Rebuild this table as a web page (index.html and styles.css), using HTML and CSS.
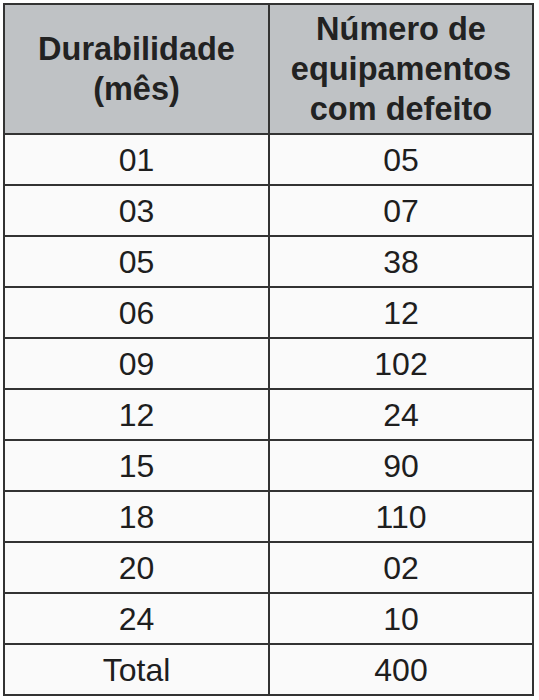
FILE: index.html
```html
<!DOCTYPE html>
<html lang="pt">
<head>
<meta charset="utf-8">
<link rel="stylesheet" href="styles.css">
</head>
<body>
<table class="data">
  <thead>
    <tr>
      <th class="col-a">Durabilidade<br>(mês)</th>
      <th class="col-b">Número de<br>equipamentos<br>com defeito</th>
    </tr>
  </thead>
  <tbody>
    <tr><td class="col-a">01</td><td class="col-b">05</td></tr>
    <tr><td class="col-a">03</td><td class="col-b">07</td></tr>
    <tr><td class="col-a">05</td><td class="col-b">38</td></tr>
    <tr><td class="col-a">06</td><td class="col-b">12</td></tr>
    <tr><td class="col-a">09</td><td class="col-b">102</td></tr>
    <tr><td class="col-a">12</td><td class="col-b">24</td></tr>
    <tr><td class="col-a">15</td><td class="col-b">90</td></tr>
    <tr><td class="col-a">18</td><td class="col-b">110</td></tr>
    <tr><td class="col-a">20</td><td class="col-b">02</td></tr>
    <tr><td class="col-a">24</td><td class="col-b">10</td></tr>
    <tr class="last"><td class="col-a">Total</td><td class="col-b">400</td></tr>
  </tbody>
</table>
</body>
</html>
```
FILE: styles.css
```css
html, body {
  margin: 0;
  padding: 0;
  background: #ffffff;
}
body {
  padding: 3px 0 0 3px;
  font-family: "Liberation Sans", Arial, sans-serif;
  color: #1e1e1e;
}
.data {
  border-collapse: separate;
  border-spacing: 0;
  border: 2px solid #333333;
  background: #fafafa;
  table-layout: fixed;
}
.data th,
.data td {
  padding: 0;
  text-align: center;
  border-bottom: 2px solid #333333;
}
.data .last td {
  border-bottom: none;
}
.col-a {
  width: 263px;
  border-right: 2px solid #333333;
}
.col-b {
  width: 262px;
}
.data th {
  background: #bfc2c5;
  height: 128px;
  font-size: 32.5px;
  line-height: 40px;
  font-weight: bold;
  vertical-align: middle;
  color: #222222;
}
.data td {
  height: 49px;
  font-size: 32px;
  line-height: 36px;
  font-weight: normal;
  vertical-align: middle;
}
```
